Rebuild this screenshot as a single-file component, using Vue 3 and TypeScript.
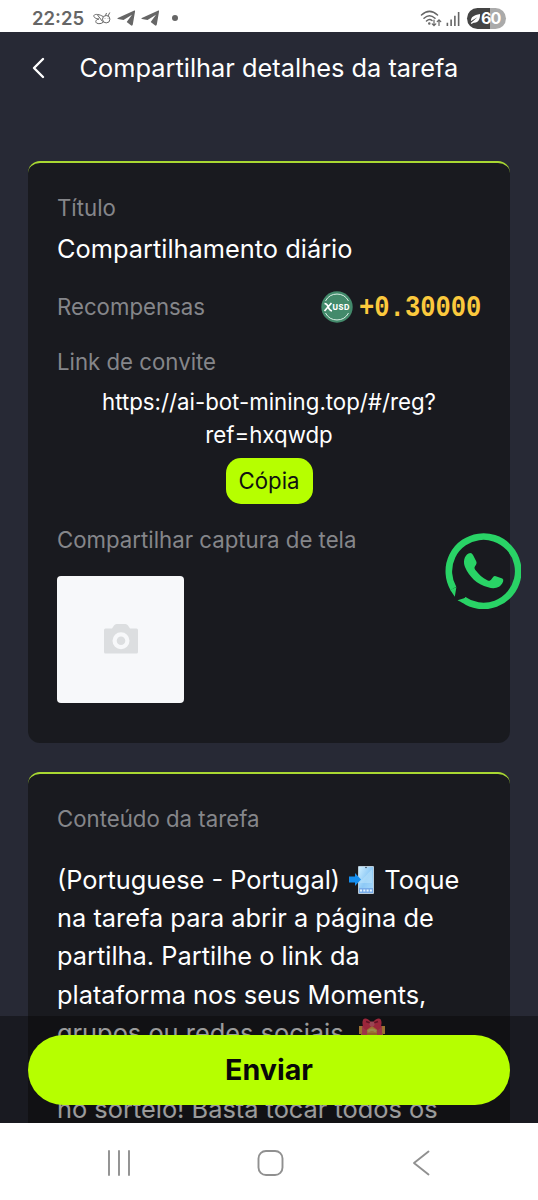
<script setup lang="ts">
const title: string = 'Compartilhar detalhes da tarefa'
const task = {
  name: 'Compartilhamento diário',
  reward: '+0.30000',
  link: ['https://ai-bot-mining.top/#/reg?', 'ref=hxqwdp'],
}
</script>

<template>
  <div class="phone">
    <div class="status">
      <span class="time">22:25</span>
      <svg class="bee" viewBox="0 0 18 16" fill="none" stroke="#666" stroke-width="1">
        <circle cx="13.200" cy="9.200" r="3.700" />
        <path d="M10 6.500C7 4.500 2 3.500 .9 5.500c-.5 2 2 3.200 5 3.500M6 9C3 9.500 2 11.500 3.500 13c2 1.200 5 .8 7-1M4.500 5l5 6.500M12.500 5.500l1-2.500M15 6l1.800-3.500" />
        <path d="M12 8.500v.5M15 8.500v.5" />
      </svg>
      <svg v-for="n in 2" :key="n" class="plane" viewBox="0 0 19 16">
        <path d="M.8 8 16.800.7c1-.4 1.400.1 1.200 1L15.800 14.500c-.2 1.200-1 1.400-1.900.8l-4.200-3.200L15 4.800 6.500 9.900 1 9c-.7-.2-.8-.7-.2-1Z" fill="#666" />
      </svg>
      <i class="dot"></i>
      <svg class="wifi" viewBox="0 0 22 17" fill="none" stroke="#666" stroke-width="1.500" stroke-linecap="round">
        <path d="M1.500 5Q9.500-2.200 17.500 5M4 8.200q5.500-5 11 0M6.500 11q3-2.600 5.500-.5" />
        <circle cx="9.300" cy="13.500" r=".5" fill="#666" />
        <path d="M14 10v5.500m-1.800-1.700L14 15.600l1.800-1.800M19 15.500V10m-1.800 1.700L19 9.900l1.800 1.800" stroke-width="1.200" />
      </svg>
      <svg class="signal" viewBox="0 0 14 16" stroke="#666" stroke-width="1.700">
        <path d="M1 12.500V16M5 9v7M9 5v11M13 1v15" />
      </svg>
      <span class="battery">
        <svg viewBox="0 0 12 12"><path d="M1 9C1 4 4 2.500 11 1c0 6-2 10-7 9.500L1.500 12 .8 11l3-2.500L8 4.500 3 7.500Z" fill="#fff" /></svg>
        <b>60</b>
      </span>
    </div>

    <main class="page">
      <header class="head">
        <svg class="back" viewBox="0 0 14 22"><path d="M12 2 3 11l9 9" fill="none" stroke="#fff" stroke-width="2.400" stroke-linecap="round" stroke-linejoin="round" /></svg>
        <h1>{{ title }}</h1>
      </header>

      <section class="card info">
        <div class="label l-title">Título</div>
        <div class="name">{{ task.name }}</div>
        <div class="reward">
          <span class="label l-reward">Recompensas</span>
          <span class="value">
            <svg class="coin" viewBox="0 0 32 32">
              <circle cx="16" cy="16" r="15.700" fill="#438a6b" />
              <path d="M4.500 10a13 13 0 0 1 23 0M4.500 22a13 13 0 0 0 23 0" fill="none" stroke="#d8eee4" stroke-width="1" />
              <path d="M3.500 12.500q2.500 0 3.700 3.500t3.800 4M10.500 12l-7 8" fill="none" stroke="#fff" stroke-width="1.700" />
              <text x="11.500" y="18.700" font-size="7.500" font-weight="800" fill="#fff" textLength="17">USD</text>
            </svg>
            <span class="amount"><span>{{ task.reward }}</span></span>
          </span>
        </div>
        <div class="label l-link">Link de convite</div>
        <div class="url"><div v-for="part in task.link" :key="part"><span>{{ part }}</span></div></div>
        <button class="copy">Cópia</button>
        <div class="label l-shot">Compartilhar captura de tela</div>
        <div class="upload">
          <svg viewBox="0 0 34 30">
            <path fill-rule="evenodd" d="M1.500 4.500H8l2-3Q11 0 12.500 0h9Q23 0 24 1.500l2 3h6.500Q34 4.500 34 6v22q0 1.500-1.500 1.500h-31Q0 29.500 0 28V6q0-1.500 1.500-1.500ZM17 8.200a8.500 8.500 0 1 0 0 17 8.500 8.500 0 0 0 0-17Z" fill="#dcdee0" />
            <circle cx="17" cy="16.700" r="4.300" fill="#dcdee0" />
          </svg>
        </div>
      </section>

      <section class="card content">
        <div class="label l-content">Conteúdo da tarefa</div>
        <div class="text">
          <div class="c1">
            (Portuguese - Portugal)
            <svg class="emoji phone-emoji" viewBox="0 0 28 30">
              <defs><linearGradient id="screen" x1="0" y1="0" x2="1" y2="1"><stop stop-color="#cdeeff" /><stop offset=".5" stop-color="#8dc9f6" /><stop offset="1" stop-color="#a8d9fa" /></linearGradient></defs>
              <rect x="10" y="1" width="16" height="28" rx="1" fill="#b9cbd8" />
              <rect x="11" y="2" width="14" height="26" fill="url(#screen)" />
              <path d="M12 17 24 4v14H12Z" fill="#b8e1fa" opacity=".6" />
              <path d="M11 23h14v5H11Z" fill="#78ace9" />
              <path d="M12 25.500h12" stroke="#e3f4ff" stroke-width="2" stroke-dasharray="2 1.300" />
              <circle cx="18" cy="2.500" r=".8" fill="#345" />
              <path d="M1 11.500h6V8l6 6.500L7 21v-3.500H1Z" fill="#168ff0" />
            </svg>
            Toque
          </div>
          <div class="c2">na tarefa para abrir a página de</div>
          <div class="c3">partilha. Partilhe o link da</div>
          <div class="c4">plataforma nos seus Moments,</div>
          <div class="c5">
            grupos ou redes sociais.
            <svg class="emoji gift" viewBox="0 0 28 30">
              <path d="M1 8h26v8H1Z" fill="#ffb94f" />
              <path d="M3 15h22v14H3Z" fill="#f0a040" />
              <path d="M4 8h5v21H4ZM19 8h5v21h-5Z" fill="#ff5a72" />
              <path d="M14 5C8-2 4 0 4.500 5.500q.5 6.500 4 6.500L14 8l5.500 4q3.500 0 4-6.500C24 0 20-2 14 5Z" fill="#ff3d5f" />
              <path d="M12.500 5 8 3.500M15.500 5 20 3.500" stroke="#a01a3a" stroke-width="1.800" />
              <rect x="11.500" y="3.500" width="5" height="5" rx="2" fill="#ff7088" />
              <path d="M10 13.500q4-3.500 8 0" stroke="#ffe57b" stroke-width="2.500" fill="none" />
            </svg>
          </div>
          <div class="gap"></div>
          <div class="c7">no sorteio! Basta tocar todos os</div>
        </div>
      </section>

      <svg class="whatsapp" viewBox="0 0 76 76">
        <path d="M8.400 55.500A34.700 34.700 0 1 1 18.500 66.600" fill="none" stroke="#29d366" stroke-width="6.600" />
        <path d="M5.300 57 11.400 54 9.800 63.800ZM12.500 67.200l9-2.600-4 5.200Z" fill="#29d366" />
        <path d="M23.500 20.500q3-1.500 4.500 1.500l3.300 6.500q.8 1.600-.3 3.200c-2 2.800-1.900 3.400-.2 5.700 3 4 6.500 7.300 11.500 9.800 2 1 2.900.6 4.500-1.500l1.500-2q1-1 2.500-.5l6.500 2.200q1.600.8.800 3.200c-2.500 6.800-9.300 7.800-15 5.700C32 51.500 24 43.500 20 34c-2-5-1-11 3.500-13.500Z" fill="#29d366" />
      </svg>

      <footer class="bar"><button class="send">Enviar</button></footer>
    </main>

    <nav class="nav">
      <svg viewBox="0 0 24 26"><path d="M2 1v24M12 1v24M22 1v24" /></svg>
      <svg class="home" viewBox="0 0 28 26"><rect x="1.500" y="1" width="24" height="24" rx="7.500" /></svg>
      <svg viewBox="0 0 18 26"><path d="M16.500 1.500 2 13l14.500 11.500" /></svg>
    </nav>
  </div>
</template>

<style>
html, body { margin: 0; overflow: hidden; }
</style>

<style scoped>
* { box-sizing: border-box; }
svg { display: block; flex: none; }
.phone { width: 538px; height: 1200px; display: flex; flex-direction: column; overflow: hidden; font-family: Inter, sans-serif; color: #fff; white-space: nowrap; background: #fff; }
.status { height: 32px; flex: none; display: flex; align-items: center; padding: 4px 32px 0; color: #666; }
.time { font-size: 18.500px; font-weight: 600; width: 61px; }
.bee { width: 18px; height: 16px; margin-right: 6px; }
.plane { width: 19px; height: 16px; margin-right: 5px; }
.dot { width: 6px; height: 6px; border-radius: 50%; background: #666; margin-left: 7px; }
.wifi { width: 22px; height: 17px; margin-left: auto; }
.signal { width: 14px; height: 15px; margin: 0 7px 0 4px; }
.battery { width: 39px; height: 21px; border-radius: 11px; background: linear-gradient(90deg, #444 60%, #aaa 60%); display: flex; align-items: center; padding-left: 3px; color: #fff; }
.battery svg { width: 11px; height: 11px; }
.battery b { font-size: 16px; line-height: 21px; letter-spacing: -.8px; }
.page { flex: none; position: relative; height: 1091px; overflow: hidden; background: #272935; }
.head { height: 72px; display: flex; align-items: center; padding-left: 31px; margin-bottom: 57px; }
.back { width: 14px; height: 22px; }
h1 { margin: 0 0 0 34.500px; font-size: 25.380px; font-weight: 400; line-height: 36px; }
.card { margin: 0 28px 29px; padding: 0 29px; background: #191a1f; border-top: 2px solid #a9d832; border-radius: 12px; display: flex; flex-direction: column; overflow: hidden; }
.info { height: 582px; }
.label { color: #85868a; font-size: 22.230px; line-height: 30px; }
.l-title { margin-top: 30px; }
.name { font-size: 25.380px; line-height: 36px; margin-top: 8px; }
.reward { display: flex; align-items: center; justify-content: space-between; height: 36px; margin-top: 22px; }
.value { display: flex; align-items: center; gap: 6px; }
.coin { width: 32px; height: 32px; }
.amount { width: 122.500px; height: 32px; line-height: 34px; font-family: "Liberation Mono", monospace; font-weight: 700; font-size: 30px; color: #fbc93d; }
.amount span { display: inline-block; transform: scaleX(.85); transform-origin: 0 50%; }
.l-link { margin-top: 22px; }
.url { text-align: center; font-size: 22.250px; line-height: 33px; margin-top: 8px; }
.copy { align-self: center; width: 87px; height: 46px; flex: none; margin-top: 7px; border: 0; border-radius: 15px; padding: 0; background: #b6ff00; color: #111; font: 400 22.200px/46px Inter, sans-serif; }
.l-shot { margin-top: 21px; }
.upload { width: 127px; height: 127px; flex: none; margin-top: 20.500px; border-radius: 4px; background: #f7f8fa; display: flex; align-items: center; justify-content: center; }
.upload svg { width: 34px; height: 30px; margin-bottom: 1px; }
.content { height: 500px; }
.l-content { margin-top: 30px; }
.text { margin-top: 27px; font-size: 25.380px; line-height: 38.200px; }
.text > div { height: 38.200px; }
.emoji { display: inline-block; width: 28px; height: 30px; vertical-align: -6px; }
.phone-emoji { margin: 0 1px; }
.whatsapp { position: absolute; left: 444.500px; top: 501px; width: 76px; height: 76px; }
.bar { position: absolute; left: 0; right: 0; bottom: 0; height: 107px; padding: 19px 28px; background: rgba(6, 6, 6, .4); }
.send { display: block; width: 482px; height: 70px; padding: 0; border: 0; border-radius: 35px; background: #b6ff00; color: #080808; font: 700 28.600px/70px Inter, sans-serif; }
.nav { flex: 1; display: flex; align-items: center; padding: 3px 108px 0 107px; justify-content: space-between; }
.nav svg { height: 26px; fill: none; stroke: #909090; stroke-width: 1.900; stroke-linecap: round; stroke-linejoin: round; }
.nav .home { margin-right: 2px; }
</style>
